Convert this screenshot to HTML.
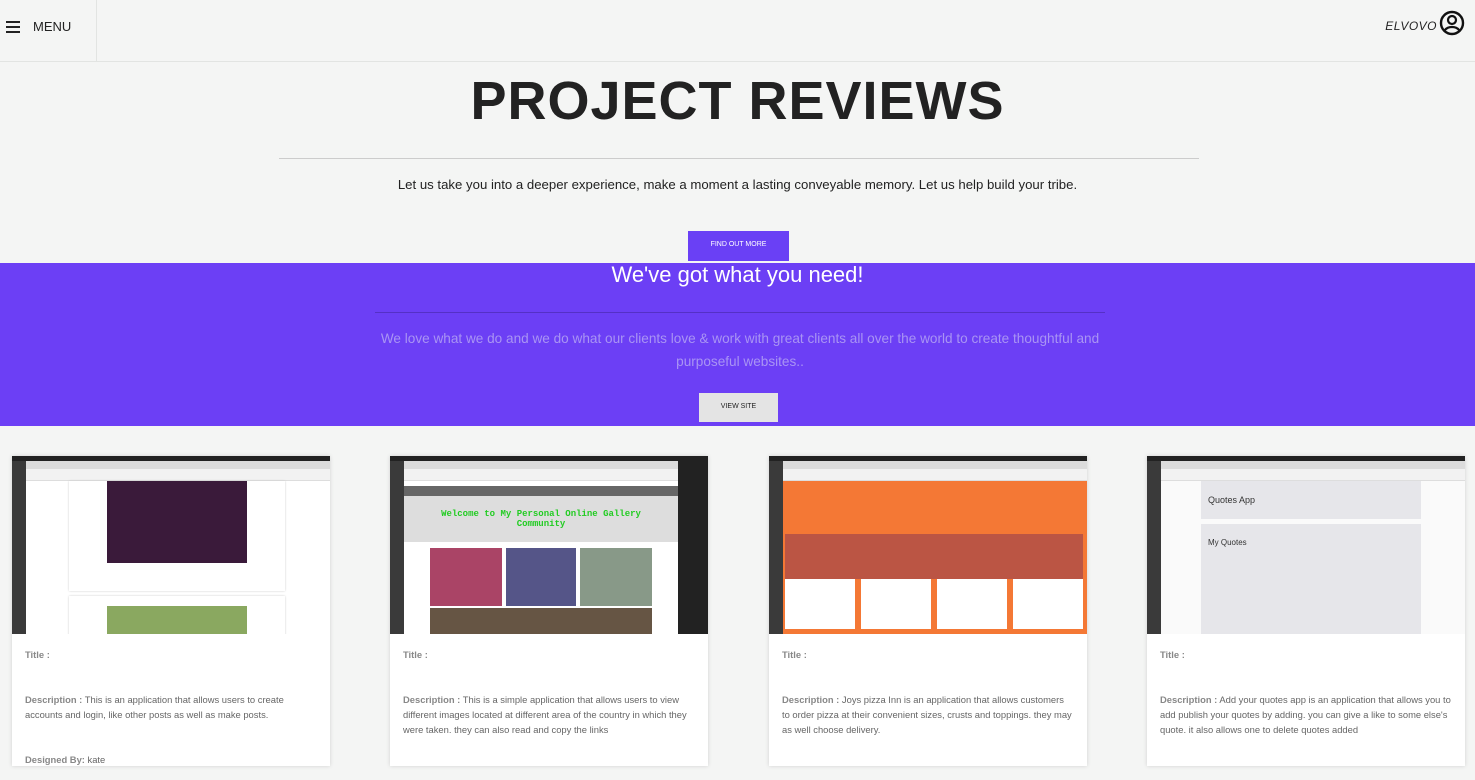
<!DOCTYPE html>
<html><head><meta charset="utf-8"><style>
*{box-sizing:border-box;margin:0;padding:0}
body{width:1475px;height:752px;overflow:hidden;background:#f4f5f4;font-family:"Liberation Sans",sans-serif;position:relative}
.top{position:absolute;left:0;top:0;width:1475px;height:62px;border-bottom:1px solid #e2e4e2}
.menu{position:absolute;left:0;top:0;width:97px;height:61px;border-right:1px solid #e2e4e2}
.ham{position:absolute;left:6px;top:21px;width:14px}
.ham i{display:block;height:2px;background:#222;margin-bottom:3px}
.menu span{position:absolute;left:33px;top:19px;font-size:13px;color:#222}
.logo{position:absolute;right:38px;top:19px;font-size:12px;font-style:italic;color:#222;letter-spacing:.5px}
h1{position:absolute;left:0;width:1475px;top:70px;text-align:center;font-size:54px;font-weight:bold;color:#222;letter-spacing:1px}
.hr1{position:absolute;left:279px;width:920px;top:158px;border-top:1px solid #ccc}
.lead{position:absolute;left:0;width:1475px;top:177px;text-align:center;font-size:13.2px;color:#222}
.btn1{position:absolute;left:688px;top:231px;width:101px;height:30px;background:#6a40f5;color:#fff;font-size:7px;text-align:center;line-height:28px}
.purple{position:absolute;left:0;top:263px;width:1475px;height:163px;background:#6c3ff5}
.purple h2{position:absolute;width:1475px;text-align:center;top:-1px;font-size:22px;font-weight:normal;color:#fff}
.hr2{position:absolute;left:375px;width:730px;top:49px;border-top:1px solid #5530c6}
.purple p{position:absolute;left:370px;width:740px;top:64px;text-align:center;font-size:13.6px;line-height:23px;color:#a994f4}
.btn2{position:absolute;left:699px;top:130px;width:79px;height:29px;background:#e4e4e4;color:#222;font-size:7px;text-align:center;line-height:27px}
.card{position:absolute;top:456px;width:318px;height:310px;background:#fff;box-shadow:0 0 4px rgba(0,0,0,.15)}
.shot{height:178px;background:#fff;position:relative;overflow:hidden}
.shot .bar{position:absolute;left:0;top:0;right:0;height:5px;background:#222}
.shot .tabs{position:absolute;left:14px;top:5px;right:0;height:8px;background:#dcdcdc}
.shot .url{position:absolute;left:14px;top:13px;right:0;height:12px;background:#f2f2f2;border-bottom:1px solid #ddd}
.shot .dock{position:absolute;left:0;top:5px;width:14px;bottom:0;background:#3a3a3a}
.card .txt{padding:13px 13px;font-size:9.4px;color:#666;line-height:15px}
.card b{color:#888}
</style></head><body>
<div class="top"><div class="menu"><div class="ham"><i></i><i></i><i></i></div><span>MENU</span></div>
<div class="logo">ELVOVO</div>
<svg style="position:absolute;right:10px;top:10px" width="26" height="26" viewBox="0 0 26 26"><circle cx="13" cy="13" r="11" fill="none" stroke="#111" stroke-width="2.4"/><circle cx="13" cy="10" r="4" fill="none" stroke="#111" stroke-width="2.2"/><path d="M6 20c3-4 11-4 14 0" fill="none" stroke="#111" stroke-width="2.2"/></svg></div>
<h1>PROJECT REVIEWS</h1>
<div class="hr1"></div>
<div class="lead">Let us take you into a deeper experience, make a moment a lasting conveyable memory. Let us help build your tribe.</div>
<div class="btn1">FIND OUT MORE</div>
<div class="purple"><h2>We've got what you need!</h2><div class="hr2"></div>
<p>We love what we do and we do what our clients love &amp; work with great clients all over the world to create thoughtful and purposeful websites..</p>
<div class="btn2">VIEW SITE</div></div>

<div class="card" style="left:12px"><div class="shot"><div class="bar"></div><div class="tabs"></div><div class="url"></div><div class="dock"></div>
<div style="position:absolute;left:57px;top:25px;width:216px;height:110px;background:#fff;box-shadow:0 0 2px #ccc"></div>
<div style="position:absolute;left:95px;top:25px;width:140px;height:82px;background:#3a1a3a"></div>
<div style="position:absolute;left:57px;top:140px;width:216px;height:40px;background:#fff;box-shadow:0 0 2px #ccc"></div>
<div style="position:absolute;left:95px;top:150px;width:140px;height:30px;background:#8aa860"></div></div>
<div class="txt"><b>Title :</b><br><br><br><b>Description :</b> This is an application that allows users to create accounts and login, like other posts as well as make posts.<br><br><br><b>Designed By:</b> kate</div></div>

<div class="card" style="left:390px"><div class="shot"><div class="bar"></div><div class="tabs"></div><div class="url"></div><div class="dock"></div>
<div style="position:absolute;left:14px;top:30px;width:274px;height:10px;background:#666"></div>
<div style="position:absolute;left:288px;top:5px;width:31px;height:173px;background:#222"></div>
<div style="position:absolute;left:14px;top:40px;width:274px;height:46px;background:#ddd;text-align:center;color:#2c2;font:bold 9px 'Liberation Mono',monospace;padding-top:13px">Welcome to My Personal Online Gallery<br>Community</div>
<div style="position:absolute;left:40px;top:92px;width:72px;height:58px;background:#a46"></div>
<div style="position:absolute;left:116px;top:92px;width:70px;height:58px;background:#558"></div>
<div style="position:absolute;left:190px;top:92px;width:72px;height:58px;background:#898"></div>
<div style="position:absolute;left:40px;top:152px;width:222px;height:26px;background:#654"></div></div>
<div class="txt"><b>Title :</b><br><br><br><b>Description :</b> This is a simple application that allows users to view different images located at different area of the country in which they were taken. they can also read and copy the links</div></div>

<div class="card" style="left:769px"><div class="shot" style="background:#f47835"><div class="bar"></div><div class="tabs"></div><div class="url"></div><div class="dock"></div>
<div style="position:absolute;left:16px;top:78px;width:70px;height:95px;background:#fff"></div>
<div style="position:absolute;left:92px;top:78px;width:70px;height:95px;background:#fff"></div>
<div style="position:absolute;left:168px;top:78px;width:70px;height:95px;background:#fff"></div>
<div style="position:absolute;left:244px;top:78px;width:70px;height:95px;background:#fff"></div>
<div style="position:absolute;left:16px;top:78px;width:298px;height:45px;background:#b54"></div></div>
<div class="txt"><b>Title :</b><br><br><br><b>Description :</b> Joys pizza Inn is an application that allows customers to order pizza at their convenient sizes, crusts and toppings. they may as well choose delivery.</div></div>

<div class="card" style="left:1147px"><div class="shot" style="background:#fafafa"><div class="bar"></div><div class="tabs"></div><div class="url"></div><div class="dock"></div>
<div style="position:absolute;left:54px;top:25px;width:220px;height:38px;background:#e6e6ea;font-size:9px;padding:14px 7px;color:#333">Quotes App</div>
<div style="position:absolute;left:54px;top:68px;width:220px;height:110px;background:#e6e6ea;font-size:8px;padding:14px 7px;color:#333">My Quotes</div></div>
<div class="txt"><b>Title :</b><br><br><br><b>Description :</b> Add your quotes app is an application that allows you to add publish your quotes by adding. you can give a like to some else's quote. it also allows one to delete quotes added</div></div>
</body></html>
